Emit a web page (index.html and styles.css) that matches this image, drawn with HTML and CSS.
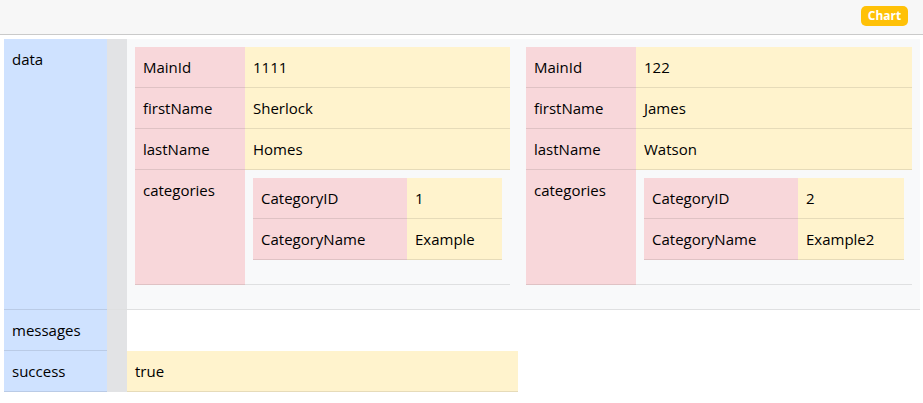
FILE: index.html
```html
<!DOCTYPE html>
<html>
<head>
<meta charset="utf-8">
<link rel="stylesheet" href="styles.css">
</head>
<body>
<div class="topbar"><button class="chart-btn">Chart</button></div>
<div class="tree">
  <div class="row row-data">
    <div class="key">data</div>
    <div class="gutter"></div>
    <div class="val val-data">
      <table class="obj obj-a">
        <tr><td class="k">MainId</td><td class="v">1111</td></tr>
        <tr><td class="k">firstName</td><td class="v">Sherlock</td></tr>
        <tr><td class="k">lastName</td><td class="v">Homes</td></tr>
        <tr><td class="k k-tall">categories</td><td class="v-nest">
          <table class="nest nest-a">
            <tr><td class="k nk">CategoryID</td><td class="v">1</td></tr>
            <tr><td class="k nk">CategoryName</td><td class="v">Example</td></tr>
          </table>
        </td></tr>
      </table>
      <table class="obj obj-b">
        <tr><td class="k">MainId</td><td class="v">122</td></tr>
        <tr><td class="k">firstName</td><td class="v">James</td></tr>
        <tr><td class="k">lastName</td><td class="v">Watson</td></tr>
        <tr><td class="k k-tall">categories</td><td class="v-nest">
          <table class="nest nest-b">
            <tr><td class="k nk">CategoryID</td><td class="v">2</td></tr>
            <tr><td class="k nk">CategoryName</td><td class="v">Example2</td></tr>
          </table>
        </td></tr>
      </table>
    </div>
  </div>
  <div class="row">
    <div class="key">messages</div>
    <div class="gutter"></div>
  </div>
  <div class="row">
    <div class="key">success</div>
    <div class="gutter"></div>
    <div class="val val-bool">true</div>
  </div>
</div>
</body>
</html>
```

FILE: styles.css
```css
html, body {
  margin: 0;
  padding: 0;
  background: #fff;
  font-family: "Open Sans", "Noto Sans", sans-serif;
  font-size: 15px;
  line-height: 24px;
  color: #000;
}
.topbar {
  height: 34px;
  background: #f7f7f7;
  border-bottom: 1px solid #cacaca;
  display: flex;
  justify-content: flex-end;
  align-items: flex-start;
  padding-right: 15px;
}
.chart-btn {
  margin-top: 6px;
  width: 47px;
  height: 20px;
  border: none;
  border-radius: 5px;
  background: #ffc107;
  color: #fff;
  font-family: "Open Sans", sans-serif;
  font-weight: 700;
  font-size: 12px;
  line-height: 20px;
  padding: 0;
}
.tree {
  margin: 4px 3px 0 4px;
}
.row {
  display: flex;
}
.key {
  width: 103px;
  box-sizing: border-box;
  padding: 8px;
  background: #cfe2ff;
  border-bottom: 1px solid #bacbe6;
}
.gutter {
  width: 20px;
  background: #e2e3e5;
}
.row-data .gutter { border-bottom: 1px solid #dfe0e1; }
.val-data {
  flex: 1;
  background: #f8f9fa;
  border-bottom: 1px solid #dfe0e1;
  padding: 8px;
  display: flex;
  gap: 16px;
  align-items: flex-start;
}
.val-bool {
  width: 391px;
  box-sizing: border-box;
  padding: 8px;
  background: #fff3cd;
  border-bottom: 1px solid #e6dbb9;
}
table {
  border-collapse: collapse;
  margin-bottom: 16px;
}
td {
  padding: 8px;
  vertical-align: top;
  box-sizing: border-box;
}
.k {
  background: #f8d7da;
  border-bottom: 1px solid #dfc2c4;
  width: 110px;
}
.v {
  background: #fff3cd;
  border-bottom: 1px solid #e6dbb9;
}
.v-nest {
  background: #f8f9fa;
  border-bottom: 1px solid #dfe0e1;
}
.obj-a { width: 375px; }
.obj-b { width: 386px; }
.nest-a { width: 249px; }
.nest-b { width: 260px; }
.nk { width: 154px; }
```
